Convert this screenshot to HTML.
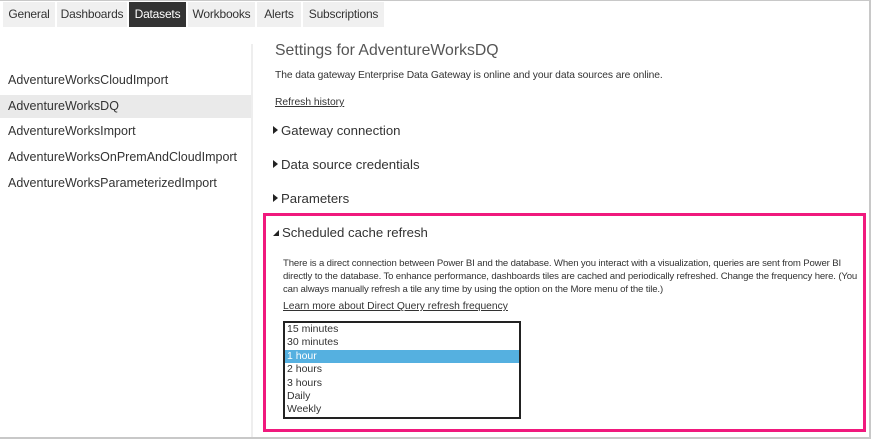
<!DOCTYPE html>
<html><head><style>
*{margin:0;padding:0;box-sizing:border-box}
body{width:871px;height:439px;background:#fff;font-family:"Liberation Sans",sans-serif;color:#222;position:relative;overflow:hidden}
.frame{position:absolute;left:0;top:0;width:871px;height:439px;border-top:1px solid #c8c8c8;border-right:2px solid #c8c8c8;border-bottom:2px solid #c8c8c8}
.a{position:absolute;white-space:nowrap}
.tab{position:absolute;top:2px;height:25px;background:#f0f0f0;font-size:12px;line-height:25px;text-align:center;color:#333;letter-spacing:-0.2px}
.tab.on{background:#333;color:#fff}
.li{position:absolute;left:0;width:251px;height:23px;font-size:12.5px;line-height:23px;padding-left:8px;color:#333}
.div{position:absolute;left:251px;top:44px;width:2px;height:395px;background:#eee}
.h{position:absolute;left:273px;font-size:13.2px;color:#333}
.tri{display:inline-block;width:0;height:0;border-top:4px solid transparent;border-bottom:4px solid transparent;border-left:5px solid #222;margin-right:3px;vertical-align:1px}
.small{font-size:10.3px;color:#333}
u{text-decoration:underline}
.box{position:absolute;left:263px;top:213px;width:603px;height:219px;border:3px solid #f0197d}
.sel{position:absolute;left:283px;top:321px;width:238px;height:98px;border:2px solid #222}
.opt{height:13.4px;font-size:10.5px;line-height:13.4px;padding-left:2px;color:#333}
.opt.on{background:#55b0e0;color:#fff}
</style></head><body>
<div class="tab" style="left:3px;width:52px">General</div>
<div class="tab" style="left:57px;width:70px">Dashboards</div>
<div class="tab on" style="left:129px;width:57px">Datasets</div>
<div class="tab" style="left:188px;width:67px">Workbooks</div>
<div class="tab" style="left:257px;width:44px">Alerts</div>
<div class="tab" style="left:303px;width:81px">Subscriptions</div>
<div class="div"></div>
<div class="li" style="top:69px">AdventureWorksCloudImport</div>
<div class="li" style="top:95px;background:#eaeaea">AdventureWorksDQ</div>
<div class="li" style="top:120px">AdventureWorksImport</div>
<div class="li" style="top:146px">AdventureWorksOnPremAndCloudImport</div>
<div class="li" style="top:172px">AdventureWorksParameterizedImport</div>
<div class="a" style="left:275px;top:42px;font-size:15.8px;color:#555">Settings for AdventureWorksDQ</div>
<div class="a small" style="left:275px;top:70px;letter-spacing:-0.1px">The data gateway Enterprise Data Gateway is online and your data sources are online.</div>
<div class="a small" style="left:275px;top:97px"><u>Refresh history</u></div>
<div class="h" style="top:123px"><span class="tri"></span>Gateway connection</div>
<div class="h" style="top:157px"><span class="tri"></span>Data source credentials</div>
<div class="h" style="top:191px"><span class="tri"></span>Parameters</div>
<div class="box"></div>
<div class="h" style="top:225px"><span style="display:inline-block;width:0;height:0;border-left:6px solid transparent;border-bottom:6px solid #222;margin-right:3px;vertical-align:1px"></span>Scheduled cache refresh</div>
<div class="a small" style="left:283px;top:257px;line-height:13px;font-size:9.6px;letter-spacing:-0.15px">There is a direct connection between Power BI and the database. When you interact with a visualization, queries are sent from Power BI<br>directly to the database. To enhance performance, dashboards tiles are cached and periodically refreshed. Change the frequency here. (You<br>can always manually refresh a tile any time by using the option on the More menu of the tile.)</div>
<div class="a small" style="left:283px;top:301px"><u>Learn more about Direct Query refresh frequency</u></div>
<div class="sel">
<div class="opt">15 minutes</div><div class="opt">30 minutes</div><div class="opt on">1 hour</div><div class="opt">2 hours</div><div class="opt">3 hours</div><div class="opt">Daily</div><div class="opt">Weekly</div>
</div>
<div class="frame"></div>
</body></html>
